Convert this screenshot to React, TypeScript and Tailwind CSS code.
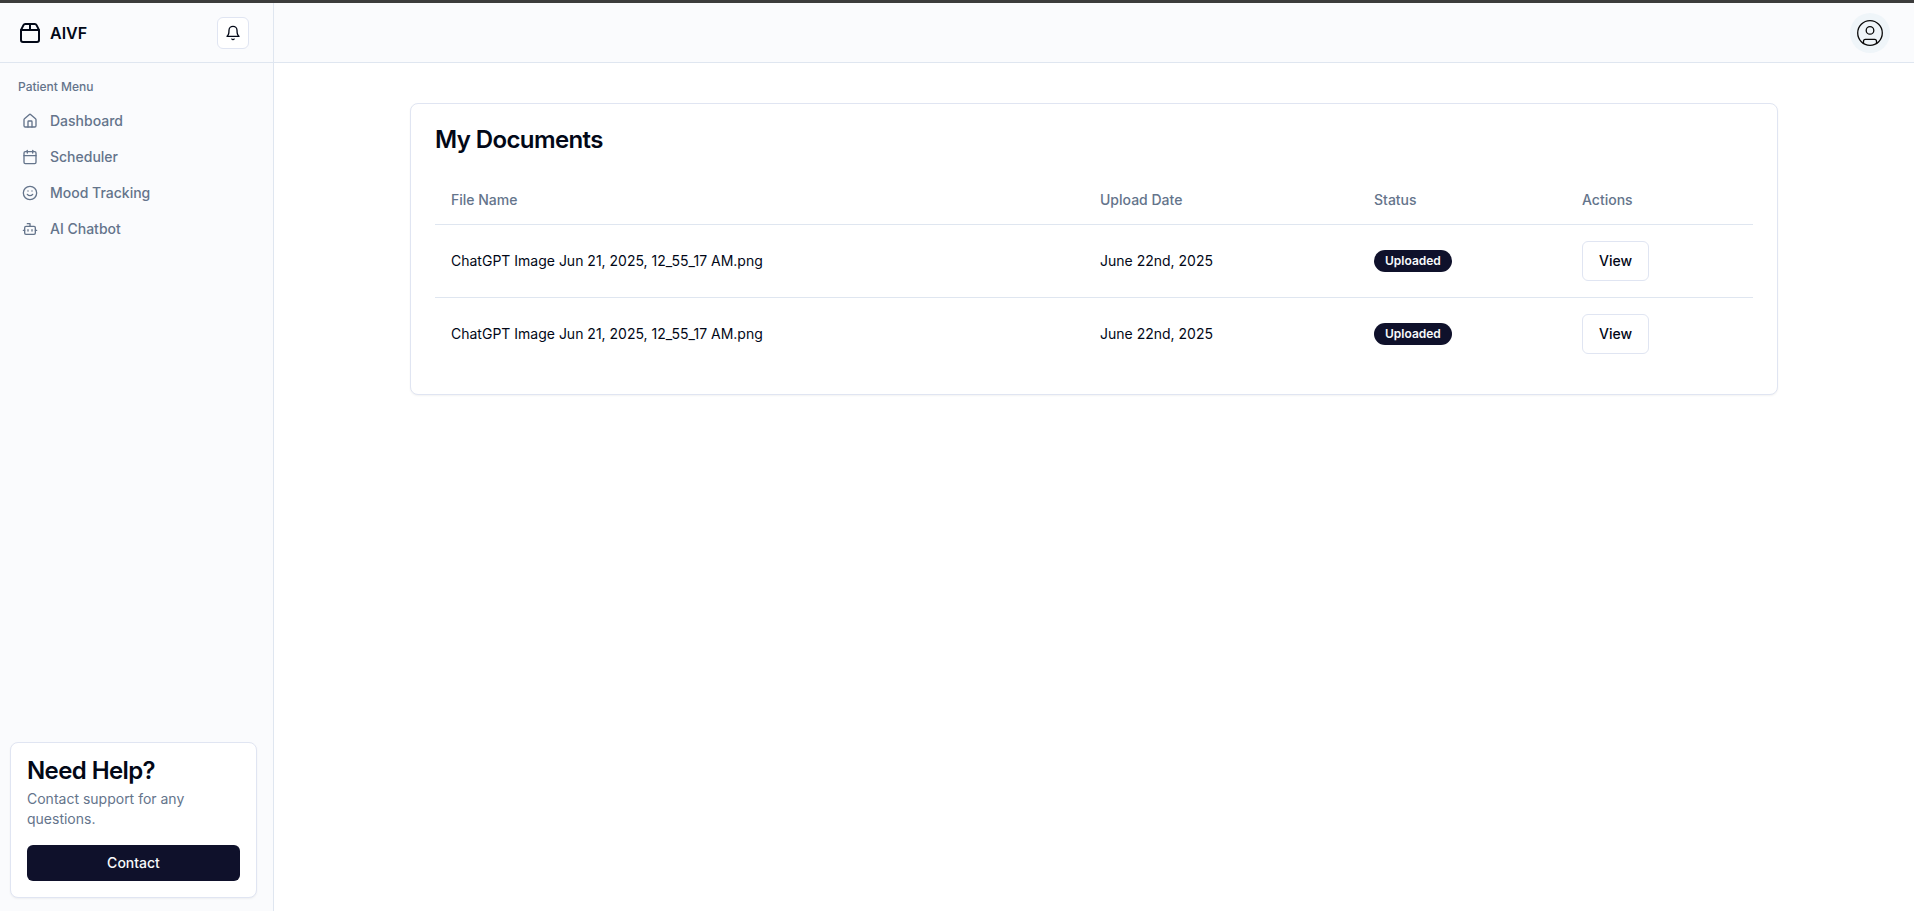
import React from "react";
import { Bot, Calendar, House, Package2, Smile } from "lucide-react";

const nav = [
  { label: "Dashboard", Icon: House },
  { label: "Scheduler", Icon: Calendar },
  { label: "Mood Tracking", Icon: Smile },
  { label: "AI Chatbot", Icon: Bot },
];

const documents = [
  { id: 1, name: "ChatGPT Image Jun 21, 2025, 12_55_17 AM.png", date: "June 22nd, 2025", status: "Uploaded" },
  { id: 2, name: "ChatGPT Image Jun 21, 2025, 12_55_17 AM.png", date: "June 22nd, 2025", status: "Uploaded" },
];

function BellIcon() {
  return (
    <svg viewBox="0 0 24 24" className="size-4" fill="none" stroke="currentColor" strokeWidth="2" strokeLinecap="round" strokeLinejoin="round">
      <path d="M6 8a6 6 0 0 1 12 0c0 7 3 9 3 9H3s3-2 3-9" />
      <path d="M10.3 21a1.94 1.94 0 0 0 3.4 0" />
    </svg>
  );
}

function AvatarIcon() {
  return (
    <svg viewBox="0 0 26 26" className="size-[26px] text-[#0a0a0a]" fill="none" stroke="currentColor" strokeWidth="1.3">
      <circle cx="13" cy="13" r="12.3" />
      <circle cx="13" cy="10.4" r="3.8" />
      <path d="M6.5 23.4v-2.1a1.9 1.9 0 0 1 1.9-1.9h9.2a1.9 1.9 0 0 1 1.9 1.9v2.1" />
    </svg>
  );
}

function Sidebar() {
  return (
    <aside className="flex w-[274px] shrink-0 flex-col border-r border-[#dfe6f0] bg-[#fafbfd]">
      <div className="flex h-[60px] shrink-0 items-center border-b border-[#dfe6f0] pr-6 pl-[18px]">
        <div className="flex items-center gap-2 font-semibold">
          <Package2 className="size-6" />
          <span>AIVF</span>
        </div>
        <button className="ml-auto flex size-8 items-center justify-center rounded-md border border-[#e0e5f2] bg-white">
          <BellIcon />
        </button>
      </div>
      <nav className="flex flex-col px-[10px] pt-4 text-sm font-medium text-[#64748b]">
        <div className="mb-2 px-2 text-xs leading-4">Patient Menu</div>
        {nav.map(({ label, Icon }) => (
          <a key={label} className="flex h-9 items-center gap-3 px-3">
            <Icon className="size-4" />
            {label}
          </a>
        ))}
      </nav>
      <div className="mt-auto mr-4 mb-[13px] ml-[10px] rounded-lg border border-[#e0e5f2] bg-white p-4 shadow-xs">
        <h3 className="text-2xl leading-6 font-semibold tracking-tight">Need Help?</h3>
        <p className="mt-1.5 text-sm text-[#64748b]">Contact support for any questions.</p>
        <button className="mt-4 h-9 w-full rounded-md bg-[#0f112b] text-sm font-medium text-slate-50">Contact</button>
      </div>
    </aside>
  );
}

export default function App() {
  return (
    <div className="flex h-screen flex-col overflow-hidden border-t-3 border-[#3c3c3c] bg-white font-['Inter',sans-serif] text-[#020817]">
      <div className="flex min-h-0 flex-1">
        <Sidebar />
        <div className="flex min-w-0 flex-1 flex-col">
          <header className="flex h-[60px] shrink-0 items-center justify-end border-b border-[#dfe6f0] bg-[#fafbfd] px-6">
            <button className="flex size-10 items-center justify-center rounded-full bg-[#eff5f9]">
              <AvatarIcon />
            </button>
          </header>
          <main className="flex-1 px-[136px] pt-10">
            <section className="rounded-lg border border-[#e0e5f2] bg-white shadow-xs">
              <h1 className="p-6 text-2xl leading-6 font-semibold tracking-tight">My Documents</h1>
              <div className="px-6 pb-6">
                <table className="w-full table-fixed text-left text-sm">
                  <colgroup>
                    <col className="w-[649px]" />
                    <col className="w-[274px]" />
                    <col className="w-[208px]" />
                    <col />
                  </colgroup>
                  <thead>
                    <tr className="border-b border-[#dfe6f0] text-[#64748b]">
                      <th className="h-12 px-4 font-medium">File Name</th>
                      <th className="h-12 px-4 font-medium">Upload Date</th>
                      <th className="h-12 px-4 font-medium">Status</th>
                      <th className="h-12 px-4 font-medium">Actions</th>
                    </tr>
                  </thead>
                  <tbody>
                    {documents.map((doc) => (
                      <tr key={doc.id} className="border-b border-[#dfe6f0] last:border-0">
                        <td className="p-4">{doc.name}</td>
                        <td className="p-4">{doc.date}</td>
                        <td className="p-4">
                          <div className="inline-flex items-center rounded-full border border-transparent bg-[#0f112b] px-2.5 py-0.5 text-xs font-semibold text-slate-50">{doc.status}</div>
                        </td>
                        <td className="p-4">
                          <button className="inline-flex h-10 items-center rounded-md border border-[#e0e5f2] bg-white px-4 font-medium">View</button>
                        </td>
                      </tr>
                    ))}
                  </tbody>
                </table>
              </div>
            </section>
          </main>
        </div>
      </div>
    </div>
  );
}
